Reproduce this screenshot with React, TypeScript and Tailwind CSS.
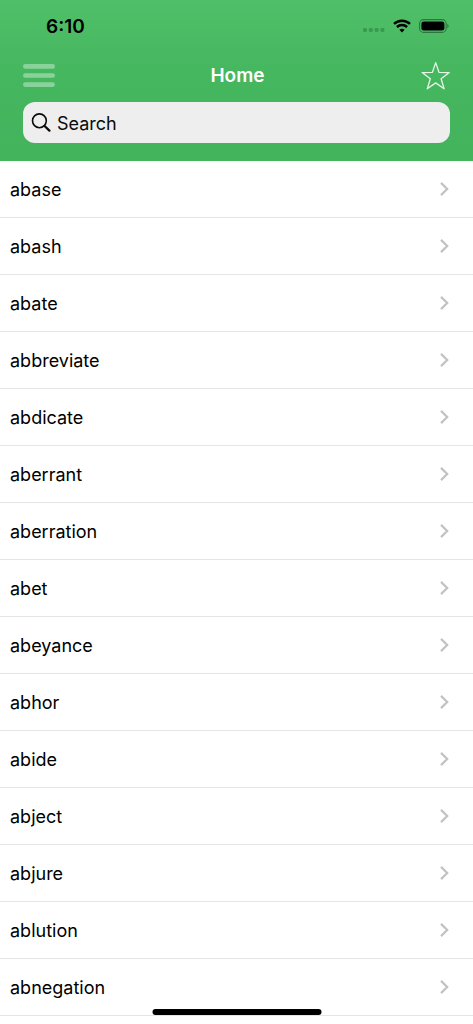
import React from 'react'

const words = [
    'abase',
    'abash',
    'abate',
    'abbreviate',
    'abdicate',
    'aberrant',
    'aberration',
    'abet',
    'abeyance',
    'abhor',
    'abide',
    'abject',
    'abjure',
    'ablution',
    'abnegation',
]

const StatusBar = () => (
    <div className="flex h-[52px] items-center justify-between pl-[46px] pr-6">
        <span className="pt-0.5 text-[19px] font-semibold text-black">6:10</span>
        <div className="flex items-center gap-2">
            {/* no signal */}
            <svg className="mt-2" width="22" height="4" viewBox="0 0 22 4" fill="#389a4e">
                <rect x="0" width="4" height="4" rx="1.4" />
                <rect x="5.8" width="4" height="4" rx="1.4" />
                <rect x="11.6" width="4" height="4" rx="1.4" />
                <rect x="17.4" width="4" height="4" rx="1.4" />
            </svg>
            <svg width="18" height="14" viewBox="0 0 18 14" fill="none" stroke="#000" strokeWidth="2.4">
                <path d="M1 4.9C5.5 .6 12.5 .6 17 4.9" />
                <path d="M3.9 8C6.8 5.3 11.2 5.3 14.1 8" />
                <path d="M9 13.5 6.4 10.8C7.8 9.5 10.2 9.5 11.6 10.8Z" fill="#000" stroke="none" />
            </svg>
            <svg width="30" height="14" viewBox="0 0 30 14">
                <rect x=".6" y=".6" width="26.6" height="12.8" rx="4" fill="none" stroke="#2c763d" strokeWidth="1.1" />
                <rect x="2.4" y="2.4" width="23" height="9.2" rx="2.3" fill="#000" />
                <path d="M28.4 4.8C30 5.5 30 8.5 28.4 9.2Z" fill="#2c763d" />
            </svg>
        </div>
    </div>
)

const Header = () => (
    <header className="bg-linear-to-b from-[#50bf69] via-[#45b75f] via-45% to-[#43b35c] pb-[18px]">
        <StatusBar />
        <div className="mb-0.5 flex h-12 items-center justify-between px-[23px]">
            <button type="button" aria-label="Menu">
                <svg width="32" height="24" viewBox="0 0 32 24" fill="#8ad29b">
                    <rect y=".1" width="32" height="4.6" rx="2.3" />
                    <rect y="9.2" width="32" height="4.6" rx="2.3" />
                    <rect y="18.3" width="32" height="4.6" rx="2.3" />
                </svg>
            </button>
            <h1 className="text-[19px] font-semibold text-white">Home</h1>
            <button type="button" aria-label="Favorites">
                <svg width="30" height="30" viewBox="0 0 30 30" fill="none" stroke="#e6f6e9" strokeWidth="1.3" strokeLinejoin="round">
                    <path d="M15.7 1.6 19 11.4 29.3 11.6 21.1 17.8 24.1 27.8 15.7 21.9 7.3 27.8 10.3 17.8 2.1 11.6 12.4 11.4Z" />
                </svg>
            </button>
        </div>
        <label className="mx-[23px] flex h-[41px] items-center gap-1.5 rounded-xl bg-[#eeeeee] px-2">
            <svg width="20" height="20" viewBox="0 0 20 20" fill="none" stroke="#0b0b0b" strokeLinecap="round">
                <circle cx="8.4" cy="7.8" r="6.9" strokeWidth="1.6" />
                <path d="M13.6 13 18.4 17.6" strokeWidth="2.3" />
            </svg>
            <input
                type="search"
                aria-label="Search"
                placeholder="Search"
                className="min-w-0 flex-1 bg-transparent pt-0.5 text-lg text-black outline-none placeholder:text-[#0b0b0b]"
            />
        </label>
    </header>
)

const WordRow = ({ word }: { word: string }) => (
    <li className="border-b border-[#e5e5e7]">
        <a href="#" className="flex h-14 items-center justify-between pl-2.5 pr-6 text-lg text-black">
            <span className="pt-0.5">{word}</span>
            <svg width="9" height="14" viewBox="0 0 9 14" fill="none" stroke="#c2c2c4" strokeWidth="2.2">
                <path d="M1 .9 7.2 7 1 13.1" />
            </svg>
        </a>
    </li>
)

const App = () => {
    return (
        <div className="min-h-screen bg-white font-['Inter',sans-serif]">
            <Header />
            <ul>
                {words.map((word) => (
                    <WordRow key={word} word={word} />
                ))}
            </ul>
            {/* home indicator */}
            <div className="fixed bottom-[9px] left-1/2 h-1.5 w-[169px] -translate-x-1/2 rounded-full bg-black" />
        </div>
    )
}

export default App
